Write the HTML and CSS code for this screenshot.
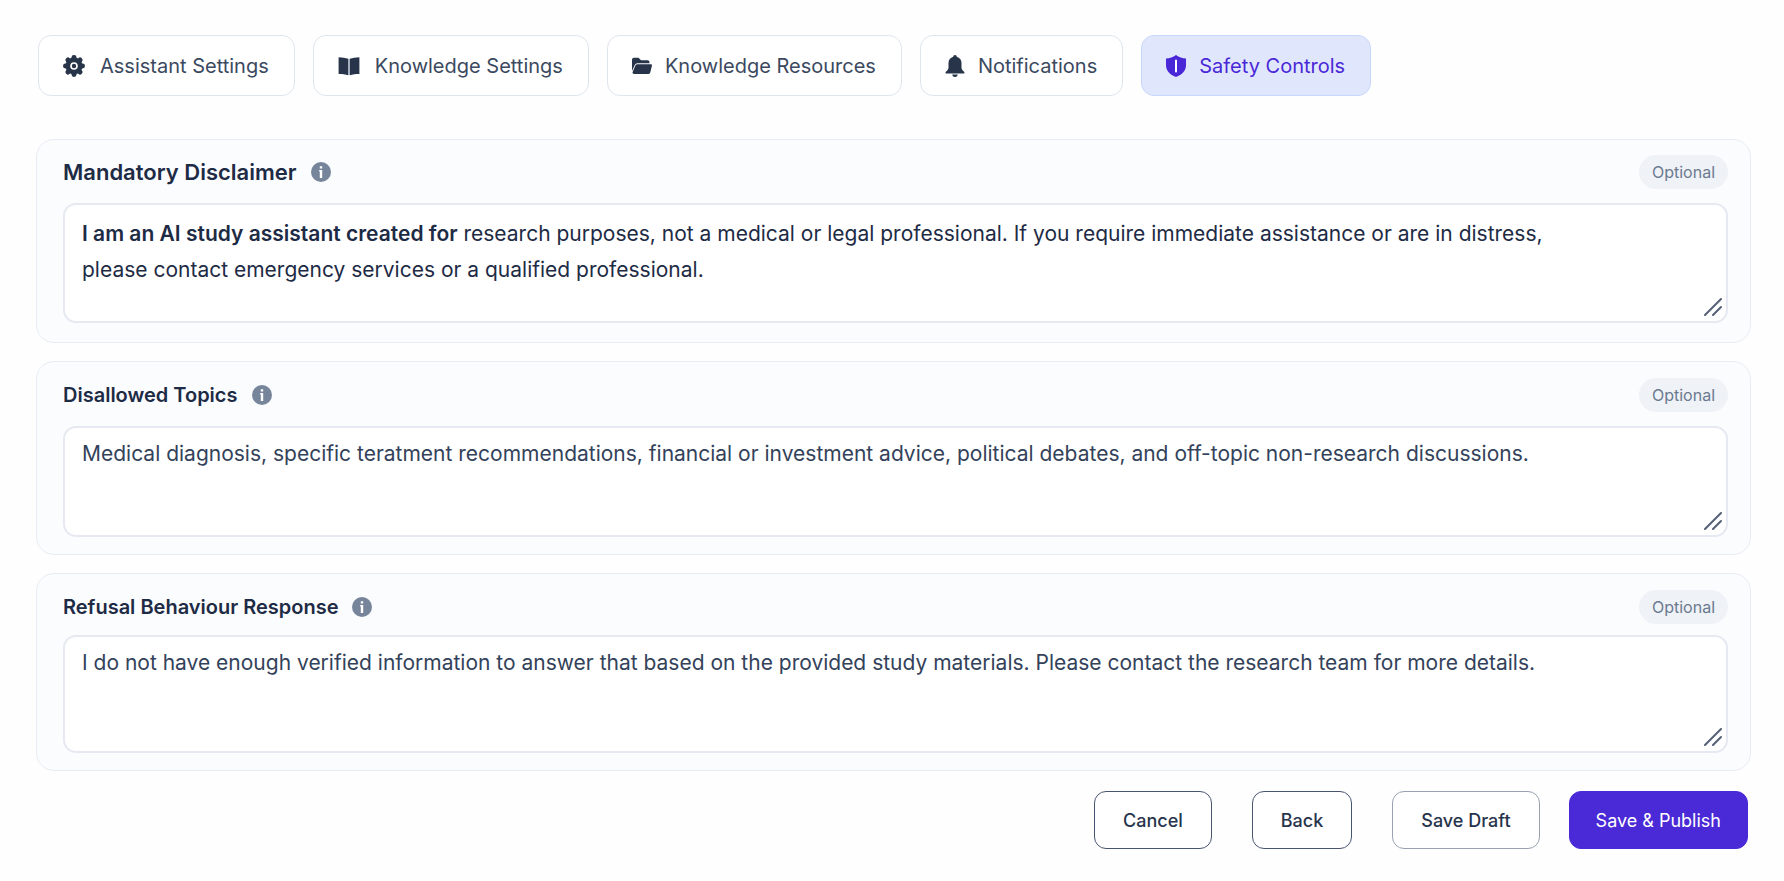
FILE: index.html
```html
<!DOCTYPE html>
<html lang="en">
<head>
    <meta charset="UTF-8">
    <meta name="viewport" content="width=device-width, initial-scale=1.0">
    <title>Safety Controls</title>
    <link rel="stylesheet" href="styles.css">
</head>
<body>
    <nav class="tabs">
        <button type="button" class="tab">
            <svg class="tab-icon" viewBox="0 0 22 22" aria-hidden="true">
                <g fill="currentColor">
                    <circle cx="11" cy="11" r="8.500"/>
                    <rect x="8.500" y="0" width="5" height="22" rx="2.400"/>
                    <rect x="8.500" y="0" width="5" height="22" rx="2.400" transform="rotate(45 11 11)"/>
                    <rect x="8.500" y="0" width="5" height="22" rx="2.400" transform="rotate(90 11 11)"/>
                    <rect x="8.500" y="0" width="5" height="22" rx="2.400" transform="rotate(135 11 11)"/>
                </g>
                <circle cx="11" cy="11" r="3" fill="none" stroke="#ffffff" stroke-width="1.600"/>
            </svg>
            Assistant Settings
        </button>
        <button type="button" class="tab">
            <svg class="tab-icon" viewBox="0 0 22 22" aria-hidden="true">
                <path fill="currentColor" d="M.6 2.200c3.600.2 6.800.5 9.700 1.600v16.400C7.400 19.300 4.200 18.900.6 18.900zM21.400 2.200c-3.600.2-6.800.5-9.700 1.600v16.400c2.900-.9 6.100-1.300 9.700-1.300z"/>
                <path d="M11 4v16" stroke="#94a3b8" stroke-width="1.200"/>
            </svg>
            Knowledge Settings
        </button>
        <button type="button" class="tab">
            <svg class="tab-icon narrow" viewBox="0 0 22 22" aria-hidden="true">
                <path fill="currentColor" d="M0 16.500V4a2 2 0 0 1 2-2h5.200l2.700 2.700h7.300a2 2 0 0 1 2 2v1.200H6a3.200 3.200 0 0 0-3 2z"/>
                <path fill="currentColor" d="M6.300 9h14.400a1.200 1.200 0 0 1 1.200 1.600l-1.800 7.600a2 2 0 0 1-1.900 1.500H2.200A1.600 1.600 0 0 1 .7 17.500l2.900-6.900A2.600 2.600 0 0 1 6.300 9z"/>
            </svg>
            Knowledge Resources
        </button>
        <button type="button" class="tab">
            <svg class="tab-icon narrow" viewBox="1 0 20 22" aria-hidden="true">
                <path fill="currentColor" d="M11 0a1.800 1.800 0 0 1 1.800 1.800c2.900.8 4.700 3.200 4.700 6.200v4.800c0 1.600 1 2.700 2.600 3.900.8.800.4 1.900-.7 1.900H2.600c-1.100 0-1.500-1.100-.7-1.900 1.600-1.200 2.600-2.300 2.600-3.900V8c0-3 1.800-5.400 4.700-6.200A1.800 1.800 0 0 1 11 0zM8.300 19.500h5.400a2.700 2.400 0 0 1-5.400 0z"/>
            </svg>
            Notifications
        </button>
        <button type="button" class="tab active" aria-current="page">
            <svg class="tab-icon narrow" viewBox="1 0 20 22" aria-hidden="true">
                <path fill="currentColor" d="M11 0c3 2.100 6.300 3.300 10 3.500v6.800c0 5.400-3.800 9.400-10 11.700C4.800 19.700 1 15.700 1 10.300V3.500C4.700 3.300 8 2.100 11 0z"/>
                <rect x="10" y="4.500" width="2" height="13" rx="1" fill="#ffffff"/>
            </svg>
            Safety Controls
        </button>
    </nav>

    <form class="settings" id="safetyForm">
        <section class="card">
            <div class="card-header">
                <span class="card-title lead" id="disclaimerLabel">Mandatory Disclaimer</span>
                <svg class="info" viewBox="0 0 20 20" aria-hidden="true">
                    <circle cx="10" cy="10" r="10" fill="currentColor"/>
                    <path d="M8.800 4.200h2.400v2.200H8.800zM8.200 8h3v8H8.800V9.600h-.6z" fill="#ffffff"/>
                </svg>
                <span class="badge">Optional</span>
            </div>
            <div class="field">
                <!-- rich text, so the opening words can carry weight -->
                <div class="text-box rich" contenteditable="true" role="textbox" aria-multiline="true" aria-labelledby="disclaimerLabel"><strong>I am an AI study assistant created for</strong> research purposes, not a medical or legal professional. If you require immediate assistance or are in distress, please contact emergency services or a qualified professional.</div>
                <svg class="grip" viewBox="0 0 18 18" aria-hidden="true"><path d="M1 17 17 1M9 17l8-8"/></svg>
            </div>
        </section>

        <section class="card">
            <div class="card-header">
                <label class="card-title" for="topics">Disallowed Topics</label>
                <svg class="info" viewBox="0 0 20 20" aria-hidden="true">
                    <circle cx="10" cy="10" r="10" fill="currentColor"/>
                    <path d="M8.800 4.200h2.400v2.200H8.800zM8.200 8h3v8H8.800V9.600h-.6z" fill="#ffffff"/>
                </svg>
                <span class="badge">Optional</span>
            </div>
            <div class="field">
                <textarea class="text-box" id="topics" name="topics">Medical diagnosis, specific teratment recommendations, financial or investment advice, political debates, and off-topic non-research discussions.</textarea>
                <svg class="grip" viewBox="0 0 18 18" aria-hidden="true"><path d="M1 17 17 1M9 17l8-8"/></svg>
            </div>
        </section>

        <section class="card card-tight">
            <div class="card-header">
                <label class="card-title" for="refusal">Refusal Behaviour Response</label>
                <svg class="info" viewBox="0 0 20 20" aria-hidden="true">
                    <circle cx="10" cy="10" r="10" fill="currentColor"/>
                    <path d="M8.800 4.200h2.400v2.200H8.800zM8.200 8h3v8H8.800V9.600h-.6z" fill="#ffffff"/>
                </svg>
                <span class="badge">Optional</span>
            </div>
            <div class="field">
                <textarea class="text-box tall" id="refusal" name="refusal">I do not have enough verified information to answer that based on the provided study materials. Please contact the research team for more details.</textarea>
                <svg class="grip" viewBox="0 0 18 18" aria-hidden="true"><path d="M1 17 17 1M9 17l8-8"/></svg>
            </div>
        </section>

        <div class="actions">
            <button type="button" class="btn">Cancel</button>
            <button type="button" class="btn">Back</button>
            <div class="save-group">
                <button type="button" class="btn btn-draft">Save Draft</button>
                <button type="submit" class="btn btn-primary">Save &amp; Publish</button>
            </div>
        </div>
    </form>
</body>
</html>
```
FILE: styles.css
```css
* {
    margin: 0;
    padding: 0;
    box-sizing: border-box;
}

body {
    font-family: Inter, 'Liberation Sans', sans-serif;
    background: #fefefe;
    color: #1e2b45;
    padding: 35px 33px 32px 36px;
}

button,
textarea {
    font-family: inherit;
}

.tabs {
    display: flex;
    flex-wrap: wrap;
    gap: 18px;
    margin-bottom: 43px;
    padding-left: 2px;
}

.tab {
    display: flex;
    align-items: center;
    gap: 15px;
    height: 61px;
    padding: 0 25px 0 24px;
    border: 1px solid #dfe5ee;
    border-radius: 13px;
    background: #ffffff;
    color: #3b4960;
    font-size: 20px;
    cursor: pointer;
}

.tab-icon {
    width: 22px;
    height: 22px;
    color: #273449;
}

.tab-icon.narrow {
    width: 20px;
    margin-right: -2px;
}

.tab.active {
    background: #e0e7fd;
    border-color: #c7d6fb;
    color: #4a27d6;
}

.tab.active .tab-icon {
    color: #4a27d6;
}

.settings {
    display: flex;
    flex-direction: column;
    gap: 18px;
}

.card {
    padding: 15px 22px 19px 26px;
    border: 1px solid #e8ecf4;
    border-radius: 18px;
    background: #fbfcfe;
}

.card + .card {
    padding-top: 16px;
    padding-bottom: 17px;
}

.card-header {
    display: flex;
    align-items: center;
    margin-bottom: 14px;
}

.card-tight .card-header {
    margin-bottom: 11px;
}

.card-title {
    font-size: 20px;
    font-weight: 600;
    color: #1e2b45;
}

.card-title.lead {
    font-size: 22px;
}

.info {
    width: 20px;
    height: 20px;
    margin-left: 14px;
    color: #77859b;
}

.badge {
    margin-left: auto;
    padding: 0 13px;
    border-radius: 17px;
    background: #eff2f6;
    color: #6b7a91;
    font-size: 16px;
    line-height: 34px;
}

.field {
    position: relative;
}

.text-box {
    display: block;
    width: 100%;
    height: 111px;
    padding: 8px 17px;
    border: 2px solid #e6e9f1;
    border-radius: 13px;
    background: #ffffff;
    color: #33425a;
    font-size: 21px;
    line-height: 36px;
    outline: none;
    overflow: auto;
    resize: vertical;
}

.text-box::-webkit-resizer {
    display: none;
}

.text-box:focus {
    border-color: #a5b4fc;
}

.text-box.rich {
    height: 120px;
    padding: 11px 160px 11px 17px;
    color: #1e2b45;
}

.text-box.rich strong {
    font-weight: 600;
}

.text-box.tall {
    height: 118px;
}

.grip {
    position: absolute;
    right: 6px;
    bottom: 7px;
    width: 18px;
    height: 18px;
    fill: none;
    stroke: #556176;
    stroke-width: 2;
    stroke-linecap: round;
    pointer-events: none;
}

.actions {
    display: flex;
    justify-content: flex-end;
    gap: 40px;
    padding: 2px 3px 0 0;
}

.save-group {
    display: flex;
    gap: 29px;
}

.btn {
    height: 58px;
    padding: 0 28px;
    border: 1px solid #46556d;
    border-radius: 12px;
    background: #ffffff;
    color: #26344c;
    font-size: 18px;
    font-weight: 500;
    cursor: pointer;
}

.btn-draft {
    border-color: #98a2b3;
}

.btn-primary {
    padding: 0 26px;
    background: #4a29d6;
    border-color: #4a29d6;
    color: #ffffff;
    font-weight: 400;
}
```
